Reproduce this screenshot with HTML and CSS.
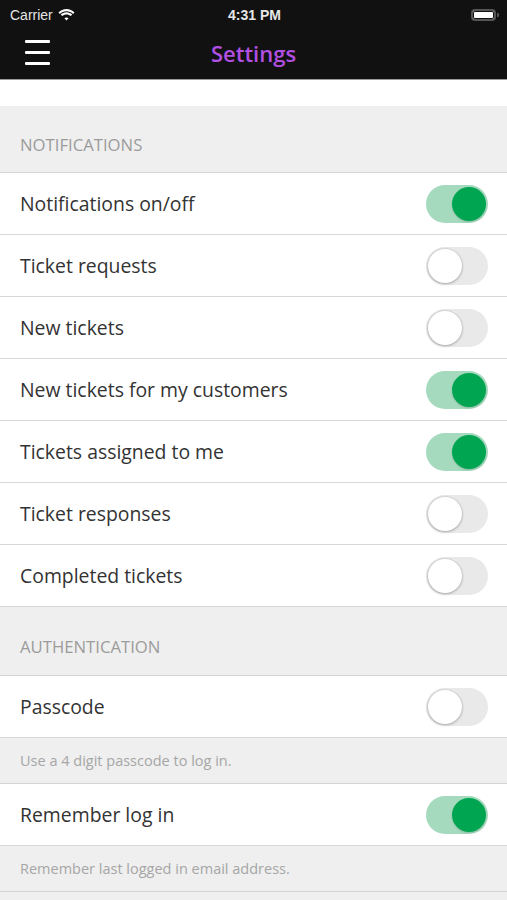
FILE: index.html
```html
<!DOCTYPE html>
<html lang="en">
<head>
  <meta charset="UTF-8">
  <title>Settings</title>
  <link rel="stylesheet" href="styles.css">
</head>
<body>

  <header class="topbar">
    <div class="status">
      <div class="carrier">Carrier
        <svg class="wifi" width="17" height="12" viewBox="0 0 17 12">
          <path d="M8.5 2.2c2.6 0 4.9 1 6.6 2.7l1.4-1.5C14.4 1.3 11.6 0 8.5 0S2.6 1.3.5 3.4l1.4 1.5C3.6 3.2 5.9 2.2 8.5 2.2z" fill="#fff"/>
          <path d="M8.5 5.4c1.7 0 3.2.7 4.3 1.7l1.4-1.5C12.7 4.2 10.7 3.3 8.5 3.3S4.3 4.2 2.8 5.6l1.4 1.5c1.1-1 2.6-1.7 4.3-1.7z" fill="#fff"/>
          <path d="M8.5 8.5c.9 0 1.6.3 2.1.8l-2.1 2.3-2.1-2.3c.5-.5 1.2-.8 2.1-.8z" fill="#fff"/>
        </svg>
      </div>
      <div class="clock">4:31 PM</div>
      <div class="battery"><span class="battery-level"></span></div>
    </div>
    <nav class="navbar">
      <div class="burger"><span></span><span></span><span></span></div>
      <h1>Settings</h1>
    </nav>
  </header>

  <div class="gap"></div>

  <section>
    <div class="section-title">NOTIFICATIONS</div>
    <div class="row"><span>Notifications on/off</span><div class="switch on"></div></div>
    <div class="row"><span>Ticket requests</span><div class="switch"></div></div>
    <div class="row"><span>New tickets</span><div class="switch"></div></div>
    <div class="row"><span>New tickets for my customers</span><div class="switch on"></div></div>
    <div class="row"><span>Tickets assigned to me</span><div class="switch on"></div></div>
    <div class="row"><span>Ticket responses</span><div class="switch"></div></div>
    <div class="row"><span>Completed tickets</span><div class="switch"></div></div>
  </section>

  <section>
    <div class="section-title tall">AUTHENTICATION</div>
    <div class="row"><span>Passcode</span><div class="switch"></div></div>
    <div class="section-note">Use a 4 digit passcode to log in.</div>
    <div class="row"><span>Remember log in</span><div class="switch on"></div></div>
    <div class="section-note">Remember last logged in email address.</div>
  </section>

</body>
</html>
```

FILE: styles.css
```css
body {
  margin: 0;
  font-family: 'Open Sans', 'Liberation Sans', sans-serif;
  background-color: #efefef;
  overflow: hidden;
}

.topbar {
  background-color: #111;
  border-bottom: 1px solid #9a9a9a;
}

.status {
  height: 29px;
  display: flex;
  align-items: center;
  justify-content: space-between;
  padding: 0 8px 0 10px;
  color: #e6e6e6;
  font-family: 'Liberation Sans', Arial, sans-serif;
  font-size: 14px;
}

.carrier {
  display: flex;
  align-items: center;
  gap: 5px;
  width: 100px;
}

.clock {
  font-weight: bold;
  font-size: 14px;
}

.battery {
  width: 100px;
  display: flex;
  justify-content: flex-end;
}

.battery-level {
  width: 21px;
  height: 8px;
  border: 2px solid #555;
  border-radius: 4px;
  background: #fff;
  box-shadow: inset 0 0 0 1px #111;
}

.battery::after {
  content: '';
  width: 2px;
  height: 4px;
  background: #555;
  margin: 4px 0 0 1px;
  border-radius: 0 1px 1px 0;
}

.navbar {
  height: 50px;
  display: flex;
  align-items: center;
  justify-content: center;
  position: relative;
}

.navbar h1 {
  margin: 0 0 3px;
  color: #b14fe2;
  font-size: 22px;
  font-weight: 600;
}

.burger {
  position: absolute;
  left: 25px;
  top: 11px;
  display: flex;
  flex-direction: column;
  gap: 8px;
}

.burger span {
  display: block;
  width: 25px;
  height: 3px;
  background: #fff;
  border-radius: 1px;
}

.gap {
  height: 26px;
  background: #fff;
}

.section-title {
  height: 67px;
  box-sizing: border-box;
  padding: 27px 20px 0;
  font-size: 16.7px;
  line-height: 24px;
  color: #9b9b9b;
  background: #efefef;
  border-bottom: 1px solid #d4d4d4;
}

.section-title.tall {
  height: 69px;
  padding-top: 28px;
}

.row {
  height: 61px;
  display: flex;
  align-items: center;
  justify-content: space-between;
  padding: 0 19px 0 20px;
  background: #fff;
  border-bottom: 1px solid #d8d8d8;
  font-size: 19.4px;
  color: #333;
}

.section-note {
  height: 45px;
  display: flex;
  align-items: center;
  padding: 0 20px;
  font-size: 14.5px;
  color: #a6a6a6;
  background: #efefef;
  border-bottom: 1px solid #d4d4d4;
}

.switch {
  width: 62px;
  height: 38px;
  border-radius: 19px;
  background: #e9e9ea;
  position: relative;
}

.switch::after {
  content: '';
  position: absolute;
  top: 2px;
  left: 2px;
  width: 34px;
  height: 34px;
  border-radius: 50%;
  background: #fff;
  box-shadow: 0 1px 3px rgba(0, 0, 0, 0.25), 0 0 0 1px #ddd;
}

.switch.on {
  background: #a5dabe;
}

.switch.on::after {
  left: 26px;
  background: #00a551;
  box-shadow: 0 1px 2px rgba(0, 0, 0, 0.15);
}
```
